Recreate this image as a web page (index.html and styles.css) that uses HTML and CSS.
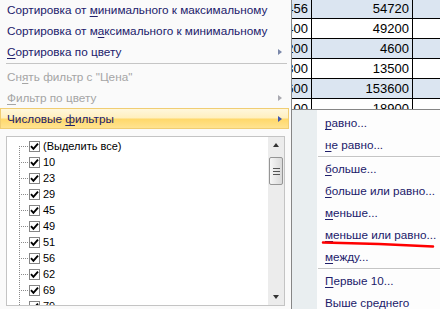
FILE: index.html
```html
<!DOCTYPE html>
<html lang="ru">
<head>
  <meta charset="UTF-8" />
  <meta name="viewport" content="width=device-width, initial-scale=1.0" />
  <title>Числовые фильтры</title>
  <link rel="stylesheet" href="styles.css">
</head>
<body>
  <table class="sheet">
    <tr class="band"><td class="a">12456</td><td class="b">54720</td><td class="c"></td></tr>
    <tr><td class="a">10400</td><td class="b">49200</td><td class="c"></td></tr>
    <tr class="band"><td class="a">1200</td><td class="b">4600</td><td class="c"></td></tr>
    <tr><td class="a">4300</td><td class="b">13500</td><td class="c"></td></tr>
    <tr class="band"><td class="a">38600</td><td class="b">153600</td><td class="c"></td></tr>
    <tr><td class="a">6100</td><td class="b">18900</td><td class="c"></td></tr>
  </table>

  <div class="menu">
    <div class="item"><span>Сортировка от <u>м</u>инимального к максимальному</span></div>
    <div class="item"><span>Сортировка от м<u>а</u>ксимального к минимальному</span></div>
    <div class="item"><span><u>С</u>ортировка по цвету</span><span class="arrow"></span></div>
    <div class="sep"></div>
    <div class="item disabled"><span>Сн<u>я</u>ть фильтр с "Цена"</span></div>
    <div class="item disabled"><span><u>Ф</u>ильтр по цвету</span><span class="arrow"></span></div>
    <div class="item active"><span>Числовые <u>ф</u>ильтры</span><span class="arrow"></span></div>

    <div class="listbox">
      <ul class="tree">
        <li class="first"><span class="branch"></span><span class="check"><svg width="9" height="9" viewBox="0 0 9 9"><polyline points="1,4.2 3.4,6.8 8,1.6" /></svg></span><span class="label">(Выделить все)</span></li>
        <li><span class="branch"></span><span class="check"><svg width="9" height="9" viewBox="0 0 9 9"><polyline points="1,4.2 3.4,6.8 8,1.6" /></svg></span><span class="label">10</span></li>
        <li><span class="branch"></span><span class="check"><svg width="9" height="9" viewBox="0 0 9 9"><polyline points="1,4.2 3.4,6.8 8,1.6" /></svg></span><span class="label">23</span></li>
        <li><span class="branch"></span><span class="check"><svg width="9" height="9" viewBox="0 0 9 9"><polyline points="1,4.2 3.4,6.8 8,1.6" /></svg></span><span class="label">29</span></li>
        <li><span class="branch"></span><span class="check"><svg width="9" height="9" viewBox="0 0 9 9"><polyline points="1,4.2 3.4,6.8 8,1.6" /></svg></span><span class="label">45</span></li>
        <li><span class="branch"></span><span class="check"><svg width="9" height="9" viewBox="0 0 9 9"><polyline points="1,4.2 3.4,6.8 8,1.6" /></svg></span><span class="label">49</span></li>
        <li><span class="branch"></span><span class="check"><svg width="9" height="9" viewBox="0 0 9 9"><polyline points="1,4.2 3.4,6.8 8,1.6" /></svg></span><span class="label">51</span></li>
        <li><span class="branch"></span><span class="check"><svg width="9" height="9" viewBox="0 0 9 9"><polyline points="1,4.2 3.4,6.8 8,1.6" /></svg></span><span class="label">56</span></li>
        <li><span class="branch"></span><span class="check"><svg width="9" height="9" viewBox="0 0 9 9"><polyline points="1,4.2 3.4,6.8 8,1.6" /></svg></span><span class="label">62</span></li>
        <li><span class="branch"></span><span class="check"><svg width="9" height="9" viewBox="0 0 9 9"><polyline points="1,4.2 3.4,6.8 8,1.6" /></svg></span><span class="label">69</span></li>
        <li><span class="branch"></span><span class="check"><svg width="9" height="9" viewBox="0 0 9 9"><polyline points="1,4.2 3.4,6.8 8,1.6" /></svg></span><span class="label">79</span></li>
      </ul>
      <div class="scrollbar">
        <span class="sb-btn"><span class="tri-up"></span></span>
        <span class="thumb"><span class="grip"></span></span>
        <span class="sb-space"></span>
        <span class="sb-btn"><span class="tri-down"></span></span>
      </div>
    </div>
  </div>

  <div class="submenu">
    <div class="sub-item"><u>р</u>авно...</div>
    <div class="sub-item"><u>н</u>е равно...</div>
    <div class="sub-sep"></div>
    <div class="sub-item"><u>б</u>ольше...</div>
    <div class="sub-item"><u>б</u>ольше или равно...</div>
    <div class="sub-item"><u>м</u>еньше...</div>
    <div class="sub-item"><u>м</u>еньше или равно...</div>
    <div class="sub-item"><u>м</u>ежду...</div>
    <div class="sub-sep"></div>
    <div class="sub-item"><u>П</u>ервые 10...</div>
    <div class="sub-item"><u>В</u>ыше среднего</div>
  </div>

  <!-- red hand-drawn mark under "меньше или равно..." -->
  <svg class="mark" width="440" height="309" viewBox="0 0 440 309">
    <path d="M323 242.5 Q380 243.5 433 246.5" />
  </svg>
</body>
</html>
```

FILE: styles.css
```css
* {
  box-sizing: border-box;
}

body {
  margin: 0;
  width: 440px;
  height: 309px;
  overflow: hidden;
  position: relative;
  background: #fff;
  font-family: "Liberation Sans", Arial, sans-serif;
}

/* spreadsheet behind the menu */
.sheet {
  border-collapse: collapse;
  table-layout: fixed;
  width: 520px;
  margin-top: -2px;
  font-size: 13px;
  color: #000;
}

.sheet td {
  height: 20px;
  padding: 0 3px 0 0;
  border: 1px solid #000;
  text-align: right;
  line-height: 18px;
}

.sheet .a {
  width: 311px;
}

.sheet .b {
  width: 101px;
}

.sheet .band td {
  background: #dbe5f1;
}

/* main filter menu */
.menu {
  position: absolute;
  left: 0;
  top: -1px;
  width: 292px;
  height: 311px;
  padding-right: 2px;
  background: #fafafa;
  border-right: 1px solid #8a8a8a;
  font-size: 11.75px;
  color: #21206a;
}

.item {
  display: flex;
  align-items: center;
  justify-content: space-between;
  height: 21px;
  padding: 0 7px;
  white-space: nowrap;
}

.item u {
  text-decoration-thickness: 1px;
  text-underline-offset: 2px;
}

.arrow {
  width: 0;
  height: 0;
  border-left: 4px solid #7b88aa;
  border-top: 3.5px solid transparent;
  border-bottom: 3.5px solid transparent;
}

.disabled {
  color: #a5a5a5;
}

.disabled .arrow {
  border-left-color: #a9a9b0;
}

.active {
  background: linear-gradient(#fff7dc, #ffefbd 48%, #ffd86a 52%, #ffe390);
  border: 1px solid #f0cd73;
  padding: 0 6px;
}

.active .arrow {
  border-left-color: #4058b0;
}

.sep {
  margin: 1px 2px 2px 6px;
  border-top: 1px solid #c5c5c5;
}

/* list of values */
.listbox {
  display: flex;
  width: 279px;
  height: 170px;
  margin: 7px 0 0 6px;
  background: #fff;
  border: 1px solid #c4c4c4;
}

.tree {
  flex: 1;
  margin: 0;
  padding: 1px 0 0 12px;
  list-style: none;
  overflow: hidden;
  font-size: 11px;
  color: #000;
}

.tree li {
  display: flex;
  align-items: center;
  height: 16px;
}

.branch {
  width: 10px;
  height: 16px;
  background:
    repeating-linear-gradient(to bottom, #8a8a8a 0 1px, transparent 1px 2px) left top / 1px 100% no-repeat,
    repeating-linear-gradient(to right, #8a8a8a 0 1px, transparent 1px 2px) left 8px / 100% 1px no-repeat;
}

.tree .first .branch {
  background:
    repeating-linear-gradient(to bottom, #8a8a8a 0 1px, transparent 1px 2px) left 8px / 1px 8px no-repeat,
    repeating-linear-gradient(to right, #8a8a8a 0 1px, transparent 1px 2px) left 8px / 100% 1px no-repeat;
}

.check {
  display: flex;
  align-items: center;
  justify-content: center;
  width: 11px;
  height: 11px;
  border: 1px solid #858585;
  background: #fff;
}

.check polyline {
  fill: none;
  stroke: #000;
  stroke-width: 1.9;
}

.label {
  margin-left: 3px;
}

.scrollbar {
  display: flex;
  flex-direction: column;
  align-items: center;
  width: 16px;
  background: #ececec;
}

.sb-btn {
  display: flex;
  align-items: center;
  justify-content: center;
  width: 16px;
  height: 16px;
}

.tri-up {
  width: 0;
  height: 0;
  border-bottom: 4px solid #333;
  border-left: 3.5px solid transparent;
  border-right: 3.5px solid transparent;
}

.tri-down {
  width: 0;
  height: 0;
  border-top: 4px solid #333;
  border-left: 3.5px solid transparent;
  border-right: 3.5px solid transparent;
}

.thumb {
  display: flex;
  align-items: center;
  justify-content: center;
  width: 14px;
  height: 28px;
  margin-top: 4px;
  border: 1px solid #959595;
  border-radius: 2px;
  background: linear-gradient(to right, #f6f6f6, #d9d9d9);
}

.grip {
  width: 7px;
  height: 7px;
  background:
    linear-gradient(#555, #555) 0 0 / 7px 1px no-repeat,
    linear-gradient(#555, #555) 0 3px / 7px 1px no-repeat,
    linear-gradient(#555, #555) 0 6px / 7px 1px no-repeat;
}

.sb-space {
  flex: 1;
}

/* numeric filters submenu */
.submenu {
  position: absolute;
  left: 291px;
  top: 109px;
  width: 160px;
  height: 210px;
  padding-top: 2px;
  border: 1px solid #868686;
  background: linear-gradient(to right, #e9eef0 25px, #fdfdfd 25px);
  font-size: 11.7px;
  color: #21206a;
}

.sub-item {
  height: 22px;
  line-height: 22px;
  padding-left: 33px;
  white-space: nowrap;
}

.sub-item u {
  text-underline-offset: 2px;
}

.sub-sep {
  margin-left: 26px;
  border-top: 1px solid #c5c5c5;
  border-bottom: 1px solid #fff;
}

.mark {
  position: absolute;
  left: 0;
  top: 0;
  pointer-events: none;
}

.mark path {
  fill: none;
  stroke: #f00;
  stroke-width: 2.5;
  stroke-linecap: round;
}
```
